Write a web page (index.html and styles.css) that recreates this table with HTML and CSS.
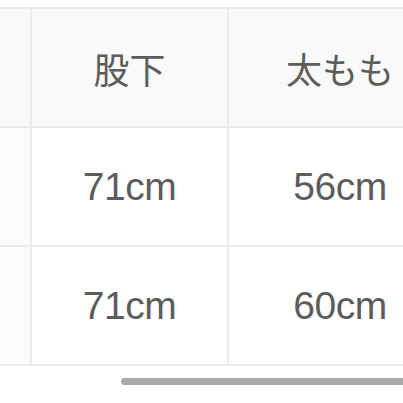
FILE: index.html
```html
<!DOCTYPE html>
<html lang="ja">
<head>
<meta charset="utf-8">
<link rel="stylesheet" href="styles.css">
</head>
<body>
<div class="viewport">
  <div class="sheet">
    <div class="cell head stub"></div>
    <div class="cell head">股下</div>
    <div class="cell head">太もも</div>
    <div class="cell stub"></div>
    <div class="cell num">71cm</div>
    <div class="cell num">56cm</div>
    <div class="cell stub"></div>
    <div class="cell num">71cm</div>
    <div class="cell num">60cm</div>
  </div>
  <div class="scrollbar"></div>
</div>
</body>
</html>
```
FILE: styles.css
```css
html, body {
  margin: 0;
  padding: 0;
  background: #ffffff;
}
.viewport {
  width: 403px;
  height: 403px;
  overflow: hidden;
  padding-top: 7px;
  box-sizing: border-box;
}
.sheet {
  display: grid;
  grid-template-columns: 60px 197px 224px;
  grid-auto-rows: 119px;
  margin-left: -30px;
  width: 481px;
  border-top: 2px solid #ececec;
  font-family: "Liberation Sans", "Noto Sans CJK JP", sans-serif;
  color: #5c5c5c;
}
.cell {
  box-sizing: border-box;
  border-bottom: 2px solid #ececec;
  border-left: 2px solid #ececec;
  display: flex;
  align-items: center;
  justify-content: center;
  background: #ffffff;
}
.stub {
  border-left: none;
  background: #fbfbfb;
}
.head {
  background: #f9f9f9;
  font-family: "Noto Sans CJK JP", sans-serif;
  font-size: 36px;
  font-weight: 400;
}
.num {
  font-size: 39px;
  letter-spacing: -0.5px;
}
.scrollbar {
  margin-top: 12px;
  margin-left: 121px;
  width: 300px;
  height: 7px;
  border-radius: 4px;
  background: #a9a9a9;
}
```
